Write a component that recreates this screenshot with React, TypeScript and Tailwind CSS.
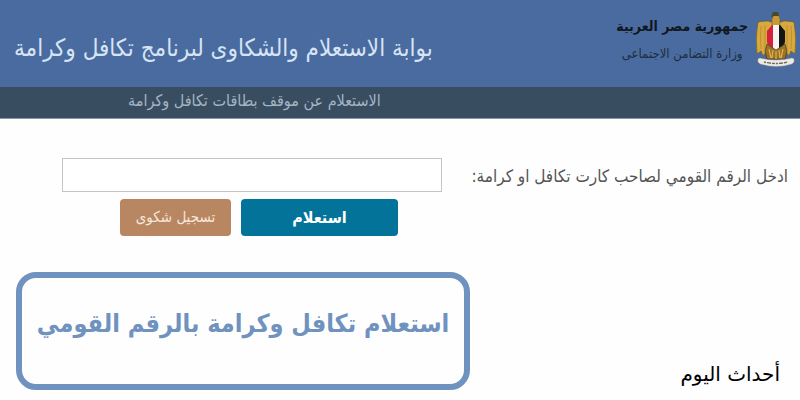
import React from 'react';

const Emblem = () => (
  <svg className="h-14 w-10 shrink-0" viewBox="0 0 40 56" role="img" aria-label="شعار جمهورية مصر العربية">
    <path d="M15 10 L12 9 Q8 9 2 10 Q-1 26 1 42 L5 39 L7 44 L10 40 L13 44 L20 47 L27 44 L30 40 L33 44 L35 39 L39 42 Q41 26 38 10 Q32 9 28 9 L25 10 Z" fill="#d8aa3e" stroke="#6b5426" strokeWidth="0.6" />
    <path d="M5 14 Q4 28 5 37 M9 13 L9 38 M35 14 Q36 28 35 37 M31 13 L31 38" fill="none" stroke="#b0842f" strokeWidth="0.7" />
    <path d="M16 7 L17 5 L17 2 L22 2 L24 7 L24 15 L16 15 Z" fill="#c79a38" stroke="#6b5426" strokeWidth="0.5" />
    <path d="M17 0 L22 0 L23 4 L18 4 L15 5 Z" fill="#4a4a28" />
    <path d="M11 19 L16 13 L17 13 L17 37 Q12 34 11 30 Z" fill="#d4213d" />
    <path d="M17 13 L23 13 L23 37 L20 39 L17 37 Z" fill="#f6f3f3" />
    <path d="M23 13 L24 13 L29 19 L29 30 Q28 34 23 37 Z" fill="#141414" />
    <path d="M11 32 L17 36 L20 38 L23 36 L29 32 L31 39 L29 47 L11 47 L9 39 Z" fill="#9a7327" stroke="#4b3d22" strokeWidth="0.7" />
    <path d="M13 37 L15 46 M17 38 L16 46 M20 39 L20 47 M23 38 L24 46 M27 37 L25 46" stroke="#e0b44b" strokeWidth="1.2" />
    <path d="M4 46 Q20 50 36 46 Q39 46 38 50 L36 52 Q20 57 4 52 L2 50 Q1 46 4 46 Z" fill="#eeebe4" stroke="#8a867d" strokeWidth="0.4" />
    <path d="M8 50 Q20 53 32 50" fill="none" stroke="#6b6863" strokeWidth="1.4" strokeDasharray="2 1 4 1 3 1" />
  </svg>
);

const App = () => {
  return (
    <div dir="rtl" className="min-h-screen bg-[#fefefe] font-['DejaVu_Sans_Condensed','DejaVu_Sans',sans-serif]">
      <header>
        <div className="flex h-[87px] items-start justify-between bg-[#4a6b9f] pt-3 pr-1 pl-[14px]">
          <div className="flex items-start gap-2">
            <Emblem />
            <div className="flex flex-col items-center whitespace-nowrap">
              <p className="text-sm leading-7 font-bold text-[#111820]">جمهورية مصر العربية</p>
              <p className="text-[13px] leading-7 text-[#1d2e42]">وزارة التضامن الاجتماعى</p>
            </div>
          </div>
          <h1 className="pt-5 text-2xl leading-8 whitespace-nowrap text-[#d7e4f5]">
            بوابة الاستعلام والشكاوى لبرنامج تكافل وكرامة
          </h1>
        </div>
        <nav className="flex h-8 items-start justify-end border-b border-[#8797a8] bg-[#394d60] pl-32">
          <a href="#inquiry" className="text-base leading-7 whitespace-nowrap text-[#a3b5c5]">
            الاستعلام عن موقف بطاقات تكافل وكرامة
          </a>
        </nav>
      </header>

      <main>
        <form id="inquiry" className="flex items-start justify-between pt-[39px] pr-3 pl-[62px]">
          <label htmlFor="national-id" className="text-[17px] leading-9 whitespace-nowrap text-[#555]">
            ادخل الرقم القومي لصاحب كارت تكافل او كرامة:
          </label>
          <div className="flex w-[380px] flex-col gap-[7px]">
            <input
              id="national-id"
              type="text"
              className="h-[34px] w-full border border-[#c4c4c4] bg-white px-2 text-base"
            />
            <div className="flex gap-[10px] pr-11">
              <button type="submit" className="h-[37px] w-[157px] rounded-sm bg-[#03739a] text-base font-bold text-white">
                استعلام
              </button>
              <button type="button" className="h-[37px] w-[111px] rounded-sm bg-[#b88762] text-[15px] text-[#f5e8dc]">
                تسجيل شكوى
              </button>
            </div>
          </div>
        </form>

        <div className="flex items-end justify-between pt-9 pr-5 pl-4">
          <p className="font-['DejaVu_Sans',sans-serif] text-xl leading-8 text-black">أحداث اليوم</p>
          <div className="h-[118px] w-[454px] rounded-[20px] border-[6px] border-[#7092be] pt-7 text-center">
            <h2 className="text-[25px] leading-9 font-bold whitespace-nowrap text-[#7092be]">
              استعلام تكافل وكرامة بالرقم القومي
            </h2>
          </div>
        </div>
      </main>
    </div>
  );
};

export default App;
